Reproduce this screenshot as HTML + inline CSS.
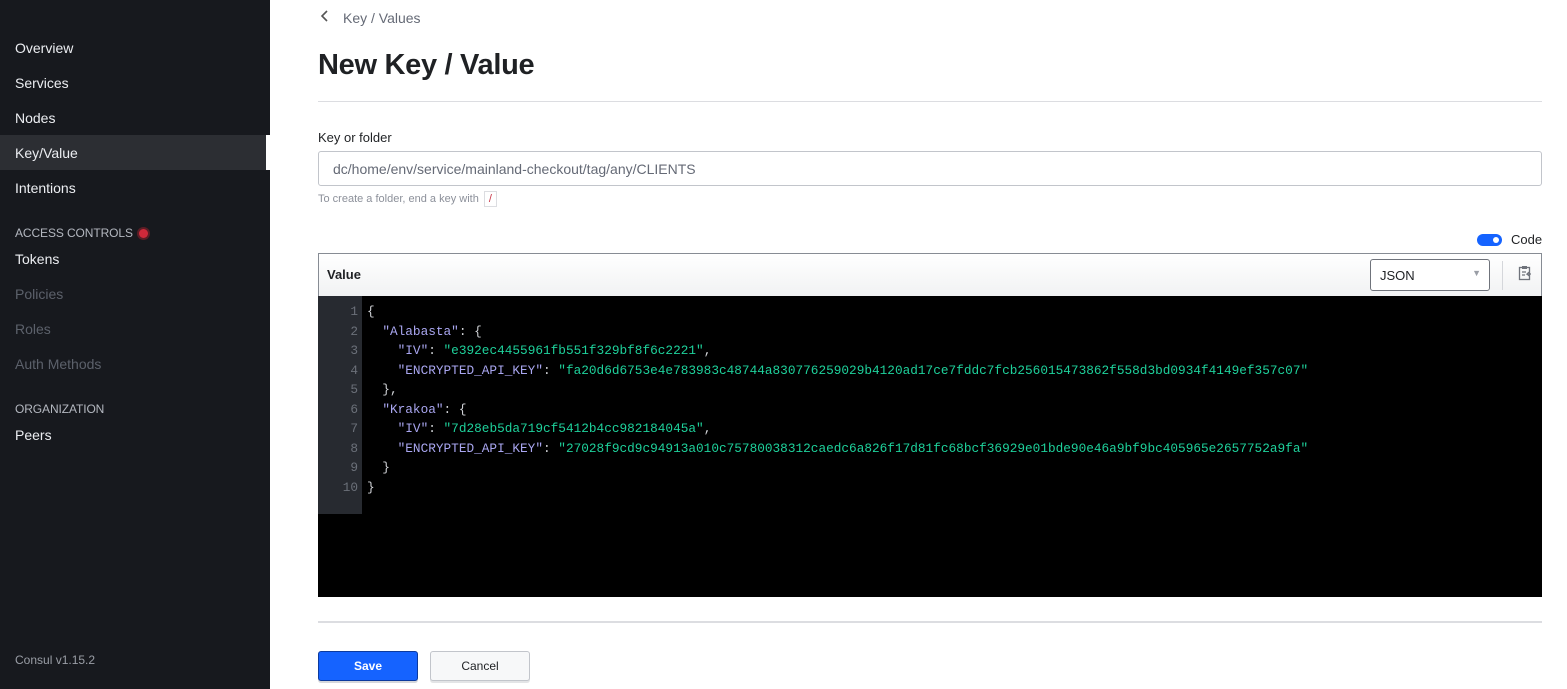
<!DOCTYPE html>
<html><head><style>
*{box-sizing:border-box;margin:0;padding:0}
body{width:1567px;height:689px;overflow:hidden;font-family:"Liberation Sans",sans-serif;background:#fff;position:relative}
.sb{position:absolute;left:0;top:0;width:270px;height:689px;background:#17191e}
.sb .it{position:absolute;left:15px;font-size:14px;color:#eceef2}
.sb .dim{color:#5c616b}
.sb .hd{position:absolute;left:15px;font-size:12px;color:#b4b8c0;letter-spacing:-.1px}
.act{position:absolute;left:0;top:135px;width:266px;height:35px;background:#2c2e33}
.abs{position:absolute}
.code{position:absolute;left:318px;top:296px;width:1224px;height:301px;background:#000}
.gut{position:absolute;left:0;top:0;width:44px;height:218px;background:#272a30}
.ln{position:absolute;font-family:"Liberation Mono",monospace;font-size:12.75px;white-space:pre}
.n{color:#6b7079;right:0;width:40px;text-align:right}
.k{color:#a9a6f0}.s{color:#1ed19b}.p{color:#d0d2d6}
</style></head><body>
<div class="sb">
<div class="act"></div>
<div class="abs" style="left:266px;top:135px;width:4px;height:35px;background:#fff"></div>
<div class="it" style="top:40px">Overview</div>
<div class="it" style="top:75px">Services</div>
<div class="it" style="top:110px">Nodes</div>
<div class="it" style="top:145px">Key/Value</div>
<div class="it" style="top:180px">Intentions</div>
<div class="hd" style="top:226px">ACCESS CONTROLS <span style="display:inline-block;width:9px;height:9px;border-radius:50%;background:#d0293a;box-shadow:0 0 0 2px #5a1d25;vertical-align:-1px;margin-left:3px"></span></div>
<div class="it" style="top:251px">Tokens</div>
<div class="it dim" style="top:286px">Policies</div>
<div class="it dim" style="top:321px">Roles</div>
<div class="it dim" style="top:356px">Auth Methods</div>
<div class="hd" style="top:402px">ORGANIZATION</div>
<div class="it" style="top:427px">Peers</div>
<div class="it" style="top:653px;font-size:12px;color:#9a9ea6">Consul v1.15.2</div>
</div>

<svg class="abs" style="left:320px;top:10px" width="10" height="12"><path d="M7 1 L2 6 L7 11" stroke="#555" stroke-width="1.6" fill="none"/></svg>
<div class="abs" style="left:343px;top:10px;font-size:14px;color:#656a76">Key / Values</div>
<div class="abs" style="left:318px;top:49px;font-size:29px;font-weight:bold;color:#1f2124;letter-spacing:-.3px">New Key / Value</div>
<div class="abs" style="left:318px;top:101px;width:1224px;height:1px;background:#dcdde1"></div>
<div class="abs" style="left:318px;top:130px;font-size:13px;color:#1f2124">Key or folder</div>
<div class="abs" style="left:318px;top:151px;width:1224px;height:35px;border:1px solid #c2c5cb;border-radius:3px;font-size:14px;color:#656a76;padding:9px 0 0 14px">dc/home/env/service/mainland-checkout/tag/any/CLIENTS</div>
<div class="abs" style="left:318px;top:191px;font-size:11px;color:#8c909a">To create a folder, end a key with <span style="display:inline-block;border:1px solid #dcdde1;padding:1px 4px;color:#c73445;margin-left:2px">/</span></div>
<div class="abs" style="left:1477px;top:234px;width:25px;height:12px;border-radius:6px;background:#1563ff"><div style="position:absolute;right:3px;top:3px;width:6px;height:6px;border-radius:50%;background:#fff"></div></div>
<div class="abs" style="left:1511px;top:232px;font-size:13px;color:#1f2124">Code</div>
<div class="abs" style="left:318px;top:253px;width:1224px;height:44px;border:1px solid #878c94;background:linear-gradient(#fff,#f1f2f3)"></div>
<div class="abs" style="left:327px;top:267px;font-size:13px;font-weight:bold;color:#1f2124">Value</div>
<div class="abs" style="left:1370px;top:259px;width:120px;height:32px;border:1px solid #6f737b;border-radius:3px;background:#fff;font-size:13px;color:#1f2124;padding:8px 0 0 9px">JSON<span style="position:absolute;right:8px;top:8px;font-size:9px;color:#9a9ea6">▼</span></div>
<div class="abs" style="left:1502px;top:261px;width:1px;height:29px;background:#d5d7db"></div>
<svg class="abs" style="left:1518px;top:265px" width="14" height="16"><rect x="1.5" y="2.5" width="10" height="12" fill="none" stroke="#6f737b" stroke-width="1.3"/><rect x="4" y="1" width="5" height="3" fill="#6f737b"/><path d="M4 7h4M4 10h3M13 9h-4l2-2M9 9l2 2" stroke="#6f737b" stroke-width="1.2" fill="none"/></svg>

<div class="code">
<div class="gut"></div>
<div class="ln n" style="left:0;top:6px;line-height:19.5px">1
2
3
4
5
6
7
8
9
10</div>
<div class="ln" style="left:49px;top:6px;line-height:19.5px"><span class="p">{</span>
<span class="p">  </span><span class="k">"Alabasta"</span><span class="p">: {</span>
<span class="p">    </span><span class="k">"IV"</span><span class="p">: </span><span class="s">"e392ec4455961fb551f329bf8f6c2221"</span><span class="p">,</span>
<span class="p">    </span><span class="k">"ENCRYPTED_API_KEY"</span><span class="p">: </span><span class="s">"fa20d6d6753e4e783983c48744a830776259029b4120ad17ce7fddc7fcb256015473862f558d3bd0934f4149ef357c07"</span>
<span class="p">  },</span>
<span class="p">  </span><span class="k">"Krakoa"</span><span class="p">: {</span>
<span class="p">    </span><span class="k">"IV"</span><span class="p">: </span><span class="s">"7d28eb5da719cf5412b4cc982184045a"</span><span class="p">,</span>
<span class="p">    </span><span class="k">"ENCRYPTED_API_KEY"</span><span class="p">: </span><span class="s">"27028f9cd9c94913a010c75780038312caedc6a826f17d81fc68bcf36929e01bde90e46a9bf9bc405965e2657752a9fa"</span>
<span class="p">  }</span>
<span class="p">}</span></div>
</div>
<div class="abs" style="left:318px;top:621px;width:1224px;height:2px;background:#dcdde1"></div>
<div class="abs" style="left:318px;top:651px;width:100px;height:30px;background:#1563ff;border:1px solid #0c3a9e;border-radius:3px;color:#fff;font-size:12px;font-weight:bold;text-align:center;line-height:28px;box-shadow:0 2px 0 #d5d7db">Save</div>
<div class="abs" style="left:430px;top:651px;width:100px;height:30px;background:#f7f8f9;border:1px solid #c2c5cb;border-radius:3px;color:#1f2124;font-size:12px;text-align:center;line-height:28px;box-shadow:0 2px 0 #e3e4e6">Cancel</div>
</body></html>
